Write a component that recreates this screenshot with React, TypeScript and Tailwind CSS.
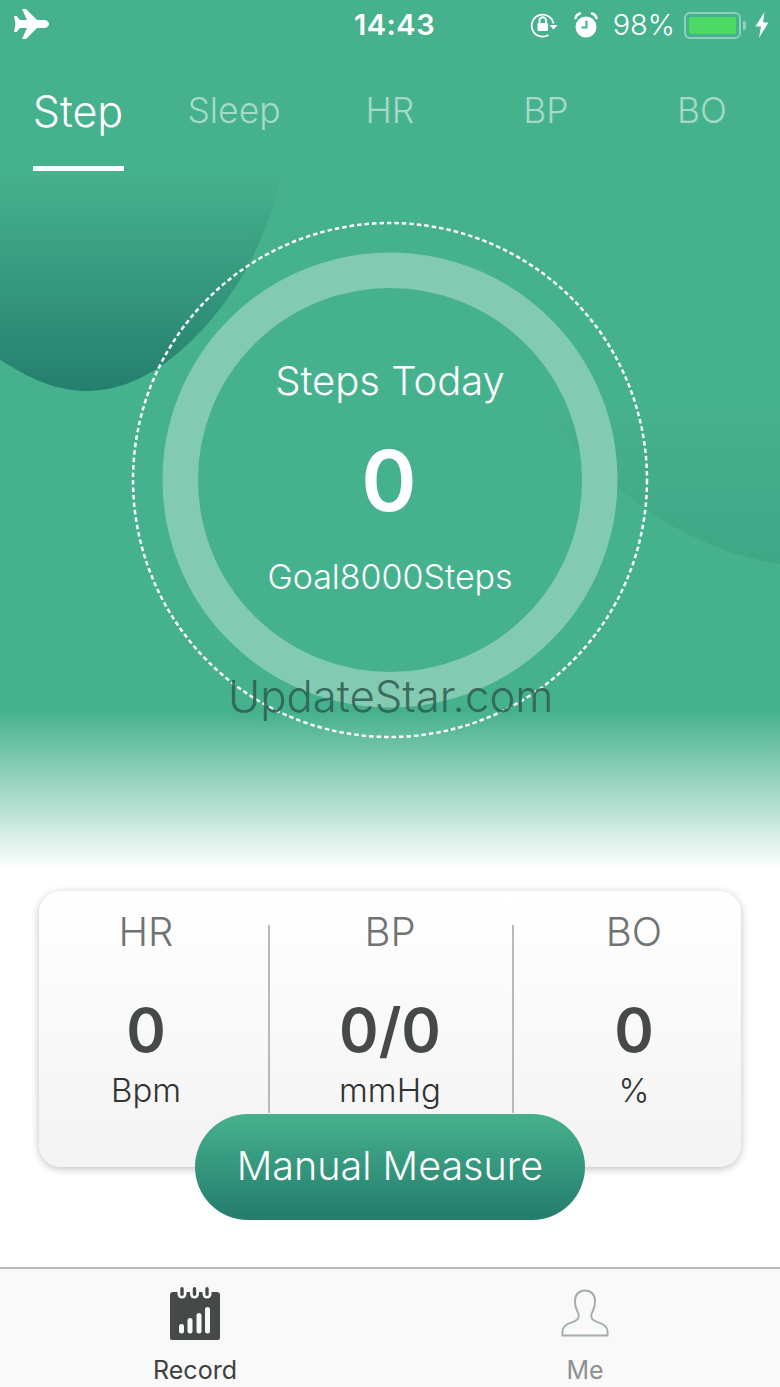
import React from "react";

function Plane() {
  return (
    <svg width="36" height="36" viewBox="13 7 36 36" fill="white">
      <path d="M22 9 L26 9 L37 20 L44 20 C47 20 49 22 49 24 C49 26 47 28 44 28 L37 28 L26 39 L22 39 L27 28 L20 28 L16.5 32 L14 32 L15.5 24 L14 16 L16.5 16 L20 20 L27 20 Z" />
    </svg>
  );
}

function Lock() {
  return (
    <svg width="28" height="28" viewBox="0 0 28 28" fill="none" stroke="white" strokeWidth="1.8">
      <path d="M23.5 12.5 A11 11 0 1 0 18.5 24" />
      <path d="M19.5 14 L27.5 14 L23.5 18.5 Z" fill="white" stroke="none" />
      <path d="M9.5 12 V9.5 A3.2 3.2 0 0 1 16 9.5 V12" />
      <rect x="7.5" y="12" width="10.5" height="8" rx="1" fill="white" stroke="none" />
    </svg>
  );
}

function Alarm() {
  return (
    <svg width="26" height="28" viewBox="0 0 26 28">
      <circle cx="13" cy="16" r="10.5" fill="white" />
      <path d="M13.5 9.5 V16.5 H8.5" fill="none" stroke="#46b18d" strokeWidth="2" />
      <path d="M2.5 7 Q3.5 3.5 7 2.5 M23.5 7 Q22.5 3.5 19 2.5" fill="none" stroke="white" strokeWidth="2.5" strokeLinecap="round" />
    </svg>
  );
}

function Battery() {
  return (
    <div className="flex items-center">
      <div className="w-[57px] h-[27px] rounded-[6px] border-2 border-[#8fd0ba] p-[3px]">
        <div className="w-full h-full rounded-[2px] bg-[#4cd964]" />
      </div>
      <div className="w-[3px] h-[9px] ml-[2px] rounded-r-[2px] bg-[#8fd0ba]" />
    </div>
  );
}

function Bolt() {
  return (
    <svg width="14" height="26" viewBox="0 0 14 26" fill="white">
      <path d="M9.5 0 L0.5 14.5 H6 L4 26 L13.5 10.5 H8 Z" />
    </svg>
  );
}

function RecordIcon() {
  return (
    <svg width="50" height="56" viewBox="170 1285 50 56">
      <path d="M173 1292 H217 Q220 1292 220 1295 V1338 Q220 1340 218 1340 H172 Q170 1340 170 1338 V1295 Q170 1292 173 1292 Z" fill="#454a49" />
      {[182, 194.5, 207].map((x) => (
        <g key={x}>
          <rect x={x - 4.5} y="1285" width="9" height="13.5" rx="4.5" fill="#f9f9f9" />
          <rect x={x - 1.7} y="1287" width="3.4" height="9" rx="1.7" fill="#454a49" />
        </g>
      ))}
      <rect x="179" y="1324" width="5" height="9.5" rx="2.5" fill="#f9f9f9" />
      <rect x="187.5" y="1318" width="5" height="15.5" rx="2.5" fill="#f9f9f9" />
      <rect x="196.5" y="1313" width="5" height="20.5" rx="2.5" fill="#f9f9f9" />
      <rect x="205" y="1307" width="5" height="26.5" rx="2.5" fill="#f9f9f9" />
    </svg>
  );
}

function MeIcon() {
  return (
    <svg width="48" height="48" viewBox="0 0 50 50" fill="none" stroke="#a3adab" strokeWidth="2">
      <path d="M1.5 48.5 V44 C1.5 38 7 36 12 34.5 C17 33 19 31 18.5 27 C18 24 14.5 21 14.5 13 C14.5 5.5 19 1.5 25 1.5 C31 1.5 35.5 5.5 35.5 13 C35.5 21 32 24 31.5 27 C31 31 33 33 38 34.5 C43 36 48.5 38 48.5 44 V48.5 Z" />
    </svg>
  );
}

function Stat({ label, value, unit }: { label: string; value: string; unit: string }) {
  return (
    <div className="flex flex-col items-center">
      <div className="h-[40px] mt-[21px] text-[40px] leading-[40px] font-light text-[#6f7372]">{label}</div>
      <div className="h-[60px] mt-[48px] text-[60px] leading-[60px] font-semibold text-[#454a49]">{value}</div>
      <div className="h-[40px] mt-[10px] text-[33px] leading-[40px] font-light text-[#2f3332]">{unit}</div>
    </div>
  );
}

export default function App() {
  const tabs = ["Step", "Sleep", "HR", "BP", "BO"];
  return (
    <div className="w-[780px] h-[1387px] flex flex-col overflow-hidden bg-white font-['Inter',sans-serif]">
      <div className="relative h-[870px] shrink-0 bg-[linear-gradient(to_bottom,#46b18d_0,#46b18d_712px,#ffffff_870px)]">
        <svg className="absolute left-0 top-0" width="780" height="870" viewBox="0 0 780 870">
          <defs>
            <linearGradient id="blobA" gradientUnits="userSpaceOnUse" x1="0" y1="175" x2="0" y2="392">
              <stop offset="0" stopColor="#46b18d" />
              <stop offset="1" stopColor="#247f6e" />
            </linearGradient>
            <linearGradient id="blobB" gradientUnits="userSpaceOnUse" x1="0" y1="410" x2="0" y2="565">
              <stop offset="0" stopColor="#46b18d" />
              <stop offset="1" stopColor="#3fa686" />
            </linearGradient>
          </defs>
          <path d="M0 150 L285 150 C278 200 262 245 240 280 C205 335 150 392 85 391 C50 390 25 375 0 360 Z" fill="url(#blobA)" />
          <path d="M535 395 C580 465 670 548 780 564 L780 350 L535 350 Z" fill="url(#blobB)" />
        </svg>

        <div className="relative flex flex-col">
          <div className="h-[50px] relative flex items-center justify-between pl-[13px] pr-[11px]">
            <Plane />
            <div className="absolute left-[354px] top-[8px] text-[29px] leading-[34px] font-semibold tracking-[0.5px] text-white">14:43</div>
            <div className="flex items-center">
              <Lock />
              <div className="ml-[15px]"><Alarm /></div>
              <div className="ml-[14px] text-[29px] leading-[34px] font-light text-white">98%</div>
              <div className="ml-[9px]"><Battery /></div>
              <div className="ml-[9px]"><Bolt /></div>
            </div>
          </div>

          <div className="grid grid-cols-5 h-[122px]">
            {tabs.map((t, i) => (
              <div key={t} className="flex flex-col items-center">
                <div className={i === 0 ? "mt-[33px] h-[56px] text-[43px] leading-[56px] font-light text-white" : "mt-[33px] h-[56px] text-[35.5px] leading-[56px] font-light text-[#a4dac7]"}>
                  <span>{t}</span>
                </div>
                {i === 0 && <div className="mt-[27px] w-[91px] h-[5px] bg-white" />}
              </div>
            ))}
          </div>

          <div className="relative mt-[49px] h-[518px] flex flex-col items-center text-white">
            <svg className="absolute left-[131px] top-0" width="518" height="518" viewBox="0 0 518 518" fill="none">
              <circle cx="259" cy="259" r="257" stroke="white" strokeWidth="2.5" strokeDasharray="4.5 3" />
              <circle cx="259" cy="259" r="209.75" stroke="#82cab2" strokeWidth="35.5" />
            </svg>
            <div className="relative mt-[136px] h-[48px] text-[40px] leading-[48px] font-[350]">Steps Today</div>
            <div className="relative mt-[31px] h-[90px] -ml-[2px] text-[84px] leading-[90px] font-semibold">0</div>
            <div className="relative mt-[29px] h-[44px] text-[34px] leading-[44px] font-[350]">Goal8000Steps</div>
          </div>
        </div>

        <div className="absolute left-[228px] top-[672px] text-[43.7px] leading-[50px] font-light text-[#2f5f54]/90">UpdateStar.com</div>
      </div>

      <div className="mt-[21px] mx-[39px] h-[276px] shrink-0 rounded-[22px] bg-[linear-gradient(to_bottom,#ffffff,#f3f3f3)] shadow-[0_2px_8px_rgba(0,0,0,0.25)] grid grid-cols-[230px_245px_227px]">
        <div className="pr-[16px]"><Stat label="HR" value="0" unit="Bpm" /></div>
        <div className="relative pr-[3px]">
          <div className="absolute -left-[1px] top-[34px] h-[188px] w-[2px] bg-[#b9b9b9]" />
          <div className="absolute right-0 top-[34px] h-[188px] w-[2px] bg-[#b9b9b9]" />
          <Stat label="BP" value="0/0" unit="mmHg" />
        </div>
        <div className="pl-[13px]"><Stat label="BO" value="0" unit="%" /></div>
      </div>

      <div className="relative -mt-[53px] mx-auto w-[390px] h-[106px] shrink-0 rounded-full bg-[linear-gradient(to_bottom,#46b18d,#237c6c)] flex items-center justify-center text-[39.5px] font-[350] text-white">
        Manual Measure
      </div>

      <div className="mt-[47px] flex-1 grid grid-cols-2 border-t-2 border-[#b9bbba] bg-[#f9f9f9]">
        <div className="flex flex-col items-center pt-[16px]">
          <RecordIcon />
          <div className="mt-[14px] text-[25px] leading-[30px] text-[#3d4140]">Record</div>
        </div>
        <div className="flex flex-col items-center pt-[20px]">
          <MeIcon />
          <div className="mt-[18px] text-[25px] leading-[30px] text-[#8d9190]">Me</div>
        </div>
      </div>
    </div>
  );
}
